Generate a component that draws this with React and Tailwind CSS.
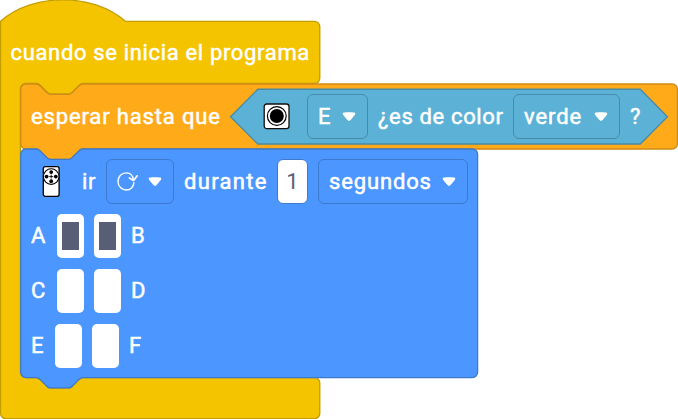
import React from "react";

const NOTCH = "c1.8,0 2.6,1 3.6,2 l4,4 c1,1 1.6,2 3.4,2 h14 c1.8,0 2.4,-1 3.4,-2 l4,-4 c1,-1 1.8,-2 3.6,-2";
const NOTCH_BACK = "c-1.8,0 -2.6,1 -3.6,2 l-4,4 c-1,1 -1.6,2 -3.4,2 h-14 c-1.8,0 -2.4,-1 -3.4,-2 l-4,-4 c-1,-1 -1.8,-2 -3.6,-2";

// Block outlines are written in workspace units and drawn at 1.3x zoom.
function Outline({ d, fill, stroke }) {
  return (
    <svg className="pointer-events-none absolute left-0 top-0 h-full w-full overflow-visible">
      <path d={d} transform="scale(1.3)" fill={fill} stroke={stroke} strokeWidth="1" />
    </svg>
  );
}

function Caret() {
  return (
    <svg className="h-[10px] w-[14px] shrink-0" viewBox="0 0 14 10">
      <path d="M1.9 .6C4.5 .2 9.5 .2 12.1 .6c1.3 .2 1.6 1.4 .7 2.3L8.6 8.1c-1.1 1.1-2.1 1.1-3.2 0L1.2 2.9C.3 2 .6 .8 1.9 .6Z" fill="#fff" />
    </svg>
  );
}

function Dropdown({ className, children }) {
  return (
    <div className={"flex h-[45px] shrink-0 items-center justify-between rounded-[6px] border pl-[10px] pr-[11px] " + className}>
      {children}
      <Caret />
    </div>
  );
}

function Label({ className = "", children }) {
  return <span className={"shrink-0 whitespace-nowrap [-webkit-text-stroke:0.5px_white] " + className}>{children}</span>;
}

function ColorSensorIcon() {
  return (
    <svg className="h-[27px] w-[27px] shrink-0" viewBox="0 0 27 27">
      <rect x="1.2" y="1" width="24.8" height="24.6" rx="2.6" fill="#fff" stroke="#111" strokeWidth="1.3" />
      <circle cx="13.8" cy="13" r="9.4" fill="#fff" stroke="#000" strokeWidth="1.2" />
      <circle cx="13.8" cy="13" r="7" fill="#000" />
    </svg>
  );
}

function MotorIcon() {
  return (
    <svg className="h-[32px] w-[18px] shrink-0" viewBox="0 0 18 32">
      <rect x="1.3" y=".7" width="15.8" height="29.6" rx="2" fill="#fff" stroke="#000" strokeWidth="1.3" />
      <circle cx="9.2" cy="10.6" r="7.8" fill="#fff" stroke="#000" strokeWidth="1.1" />
      <circle cx="9.2" cy="6.1" r="1.9" />
      <circle cx="9.2" cy="15.2" r="1.9" />
      <circle cx="4.6" cy="10.6" r="1.9" />
      <circle cx="13.8" cy="10.6" r="1.9" />
      <path d="M9.2 8.6v4M7.2 10.6h4" stroke="#000" strokeWidth=".9" />
    </svg>
  );
}

function RotateIcon() {
  return (
    <svg className="h-[20px] w-[21px] shrink-0" viewBox="0 0 21 20" fill="none" stroke="#fff" strokeWidth="1.4" strokeLinecap="round" strokeLinejoin="round">
      <path d="M16.9 10.6C16.6 15 13.4 18 9.4 18 4.6 18 1 14.2 1 9.5 1 4.6 4.6 .9 9.4 .9c3.8 0 6.4 2.6 7 7" />
      <path d="M12.4 6 16.6 8.4 20.2 3.8" strokeWidth="1.7" />
    </svg>
  );
}

function Port({ on = false }) {
  return (
    <span className="flex h-[44px] w-[27px] shrink-0 items-center justify-center rounded-[5px] bg-white">
      {on && <span className="h-[28px] w-[17px] bg-[#575e75]" />}
    </span>
  );
}

function PortRow({ left, right, on, gap }) {
  return (
    <div className="flex h-[44px] items-center gap-[10px]">
      <Label className={gap}>{left}</Label>
      <Port on={on} />
      <Port on={on} />
      <Label>{right}</Label>
    </div>
  );
}

export default function App() {
  return (
    <main className="h-[419px] w-[678px] overflow-hidden bg-white font-['Roboto',sans-serif] text-[22px] font-normal leading-none text-white">
      <section className="relative h-[419px] w-[321px]">
        <Outline
          fill="#f5c400"
          stroke="#c49d00"
          d={`M.4,16.4 c25,-22 71,-22 96,0 H242 a4,4 0 0 1 4,4 V60.2 a4,4 0 0 1 -4,4 H64 ${NOTCH_BACK} H19.7 a4,4 0 0 0 -4,4 V286.5 a4,4 0 0 0 4,4 H28 ${NOTCH} H242 a4,4 0 0 1 4,4 V318 a4,4 0 0 1 -4,4 H4.4 a4,4 0 0 1 -4,-4 Z`}
        />
        <header className="relative flex h-[84px] items-end pb-[20px] pl-[10.5px]">
          <Label className="tracking-[0.66px]">cuando se inicia el programa</Label>
        </header>
        <div className="relative flex flex-col pl-[20px]">
          <div className="relative h-[65px] w-[658px]">
            <Outline
              fill="#ffab19"
              stroke="#cf8b17"
              d={`M.6,4 a4,4 0 0 1 4,-4 H12.4 ${NOTCH} H501.7 a4,4 0 0 1 4,4 V46 a4,4 0 0 1 -4,4 H48.4 ${NOTCH_BACK} H4.6 a4,4 0 0 1 -4,-4 Z`}
            />
            <div className="relative flex h-full items-center pl-[11px]">
              <Label className="w-[199px] tracking-[0.85px]">esperar hasta que</Label>
              <div className="relative flex h-[56px] w-[438px] shrink-0 items-center pl-[33px]">
                <Outline fill="#5cb1d6" stroke="#478ba8" d="M.4,21.4 L21.4,.2 H315.6 L336.5,21.4 L315.6,42.3 H21.4 Z" />
                <div className="relative flex items-center">
                  <ColorSensorIcon />
                  <Dropdown className="ml-[17px] w-[61px] border-[#478ba8]">
                    <Label>E</Label>
                  </Dropdown>
                  <Label className="ml-[10px] w-[135px] tracking-[0.65px]">¿es de color</Label>
                  <Dropdown className="w-[107px] border-[#478ba8]">
                    <Label className="tracking-[0.9px]">verde</Label>
                  </Dropdown>
                  <Label className="ml-[10px]">?</Label>
                </div>
              </div>
            </div>
          </div>
          <div className="relative h-[229px] w-[458px]">
            <Outline
              fill="#4c97ff"
              stroke="#3d79cc"
              d={`M.6,4 a4,4 0 0 1 4,-4 H12.4 ${NOTCH} H348 a4,4 0 0 1 4,4 V171.8 a4,4 0 0 1 -4,4 H48.4 ${NOTCH_BACK} H4.6 a4,4 0 0 1 -4,-4 Z`}
            />
            <div className="relative flex flex-col gap-[10px] pt-[10px]">
              <div className="flex h-[45px] items-center pl-[22px]">
                <MotorIcon />
                <Label className="ml-[22px] w-[24px] tracking-[0.7px]">ir</Label>
                <Dropdown className="w-[68px] border-[#3d79cc]">
                  <RotateIcon />
                </Dropdown>
                <Label className="ml-[10px] w-[93px] tracking-[1.3px]">durante</Label>
                <span className="flex h-[45px] w-[31px] shrink-0 items-center justify-center rounded-[6px] border border-[#3d79cc] bg-white text-[#575e75]">1</span>
                <Dropdown className="ml-[10px] w-[150px] border-[#3d79cc]">
                  <Label className="tracking-[0.85px]">segundos</Label>
                </Dropdown>
              </div>
              <div className="flex flex-col gap-[10.75px] pl-[11px]">
                <PortRow left="A" right="B" gap="w-[16px]" on />
                <PortRow left="C" right="D" gap="w-[16px]" />
                <PortRow left="E" right="F" gap="w-[14px]" />
              </div>
            </div>
          </div>
        </div>
      </section>
    </main>
  );
}
